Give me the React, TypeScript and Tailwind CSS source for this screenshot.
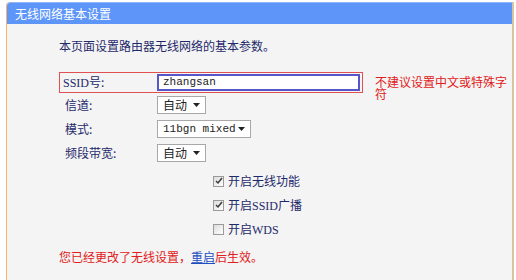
import React from "react"

function Select({ label, width, latin }: { label: string; width: string; latin?: boolean }) {
  return (
    <div
      className={`flex h-[18px] items-center justify-between border border-[#a8a8a8] bg-white px-[5px] text-[#222] ${width}`}
    >
      <span className={latin ? "font-['Liberation_Mono','Noto_Sans_CJK_SC',monospace] text-[11px]" : "text-[12px]"}>
        {label}
      </span>
      <svg width="7" height="4" viewBox="0 0 7 4">
        <path d="M0 0h7L3.5 4z" fill="#222" />
      </svg>
    </div>
  )
}

function Check({ checked, children }: { checked: boolean; children: React.ReactNode }) {
  return (
    <div className="flex h-[24px] items-center pl-[154px]">
      <div className="flex h-[11px] w-[11px] items-center justify-center border border-[#9a9a9a] bg-gradient-to-br from-[#dcdcdc] to-white">
        {checked && (
          <svg width="8" height="8" viewBox="0 0 8 8">
            <path d="M1 4l2 2 4-5" stroke="#3a3a3a" strokeWidth="1.5" fill="none" />
          </svg>
        )}
      </div>
      <span className="ml-1 text-[12px] leading-none text-[#1f2a6b]">{children}</span>
    </div>
  )
}

function Row({ label, children }: { label: string; children: React.ReactNode }) {
  return (
    <div className="flex h-[24px] items-center">
      <div className="w-[94px] pl-[2px] text-[12px] text-[#1f2a6b]">{label}</div>
      {children}
    </div>
  )
}

const latin = "font-['Liberation_Serif','Noto_Sans_CJK_SC',serif]"

export default function App() {
  return (
    <div className="h-[280px] w-[516px] overflow-hidden bg-white font-['Noto_Sans_CJK_SC',sans-serif]">
      <div className="ml-[6px] mt-[2px] w-[508px] rounded-tl-[4px] border-b-2 border-l border-r-2 border-[#d8c4a0] border-l-[#f3b862] bg-[#f4f4f4]">
        <div className="flex h-[22px] items-center rounded-tl-[4px] border-t border-[#8fb4f8] bg-[#5d95f8] pl-2 text-[12px] text-white">
          无线网络基本设置
        </div>
        <div className="h-[252px] border-b-4 border-[#faf0e0] pl-[52px]">
          <div className="mt-[14px] h-4 text-[12px] leading-4 text-[#1f2a6b]">
            本页面设置路由器无线网络的基本参数。
          </div>

          <div className="mt-[18px] flex h-[21px] items-start">
            <div className="flex h-[21px] w-[304px] items-center border border-[#e05050] pl-[3px] pr-[2px]">
              <div className="w-[94px] text-[12px] text-[#1f2a6b]">
                <span className={latin}>SSID</span>号:
              </div>
              <div className="flex h-[17px] flex-1 items-center border-2 border-[#5656c8] bg-white pl-1 font-['Liberation_Mono',monospace] text-[11px] text-[#222]">
                zhangsan
              </div>
            </div>
            <div className="ml-3 mt-1 w-[134px] text-[12px] leading-[12px] text-[#e02020]">
              不建议设置中文或特殊字符
            </div>
          </div>

          <div className="pl-1">
            <Row label="信道:">
              <Select label="自动" width="w-[49px]" />
            </Row>
            <Row label="模式:">
              <Select label="11bgn mixed" width="w-[94px]" latin />
            </Row>
            <Row label="频段带宽:">
              <Select label="自动" width="w-[49px]" />
            </Row>
          </div>

          <div className="mt-1">
            <Check checked>开启无线功能</Check>
            <Check checked>
              开启<span className={latin}>SSID</span>广播
            </Check>
            <Check checked={false}>
              开启<span className={latin}>WDS</span>
            </Check>
          </div>

          <div className="mt-2 h-4 text-[12px] leading-4 text-[#e02020]">
            您已经更改了无线设置，<span className="text-[#1f4fbf] underline">重启</span>后生效。
          </div>
        </div>
      </div>
      <div className="ml-3 h-1 w-12 bg-[#e03020]" />
    </div>
  )
}
